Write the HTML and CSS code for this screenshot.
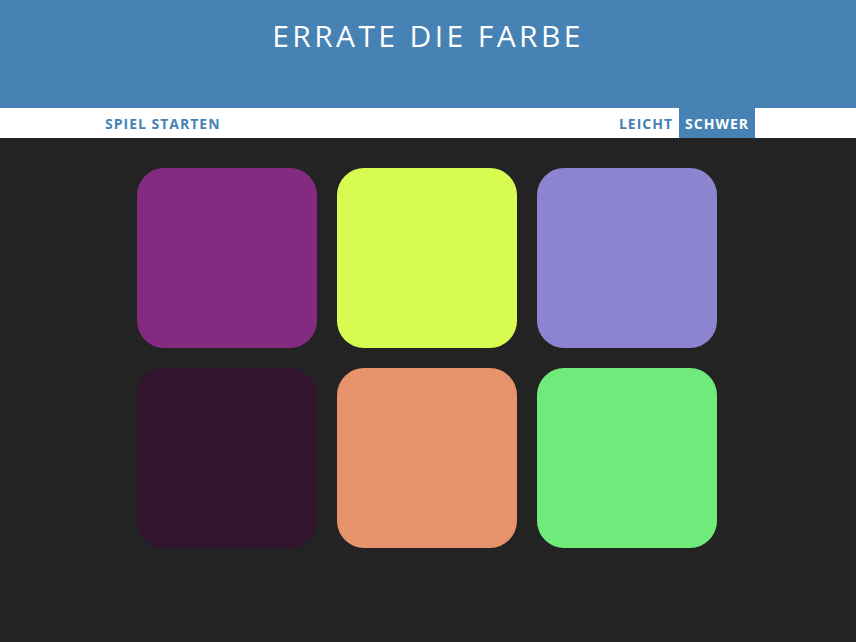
FILE: index.html
```html
<!DOCTYPE html>
<html lang="de">
<head>
<meta charset="utf-8">
<title>Errate die Farbe</title>
<link rel="stylesheet" href="styles.css">
</head>
<body>
<header class="header">
  <h1 class="title">Errate die Farbe</h1>
</header>
<nav class="stripe">
  <div class="stripe-inner">
    <button class="btn">Spiel starten</button>
    <div class="modes">
      <button class="btn">Leicht</button>
      <button class="btn selected">Schwer</button>
    </div>
  </div>
</nav>
<main class="board">
  <div class="square sq1"></div>
  <div class="square sq2"></div>
  <div class="square sq3"></div>
  <div class="square sq4"></div>
  <div class="square sq5"></div>
  <div class="square sq6"></div>
</main>
</body>
</html>
```
FILE: styles.css
```css
html, body {
  margin: 0;
  padding: 0;
}
body {
  background: #232323;
  font-family: "Open Sans", "Liberation Sans", sans-serif;
  height: 642px;
  overflow: hidden;
}
.header {
  background: #4682b4;
  height: 108px;
  box-sizing: border-box;
  padding-top: 18px;
}
.title {
  margin: 0;
  color: #fff;
  font-family: "Open Sans", sans-serif;
  font-weight: 400;
  font-size: 30px;
  line-height: 36px;
  text-align: center;
  text-transform: uppercase;
  letter-spacing: 3.4px;
  padding-left: 0;
}
.stripe {
  background: #fff;
  height: 30px;
}
.stripe-inner {
  width: 656px;
  margin-left: calc(50% - 329px);
  height: 100%;
  display: flex;
  justify-content: space-between;
}
.modes {
  display: flex;
  height: 100%;
}
.btn {
  border: none;
  background: none;
  height: 100%;
  padding: 0 6px;
  margin: 0;
  color: #4682b4;
  font-family: "Open Sans", sans-serif;
  font-weight: 700;
  font-size: 14px;
  letter-spacing: 1px;
  text-transform: uppercase;
  cursor: pointer;
}
.btn.selected {
  background: #4682b4;
  color: #fff;
}
.board {
  width: 580px;
  margin: 30px 0 0 calc(50% - 291.3px);
  display: grid;
  grid-template-columns: repeat(3, 180px);
  gap: 20px;
}
.square {
  height: 180px;
  border-radius: 27px;
}
.sq1 { background: #852a81; }
.sq2 { background: #d8fb52; }
.sq3 { background: #8c84d0; }
.sq4 { background: #33142f; }
.sq5 { background: #e6926a; }
.sq6 { background: #6eeb7a; }
```
